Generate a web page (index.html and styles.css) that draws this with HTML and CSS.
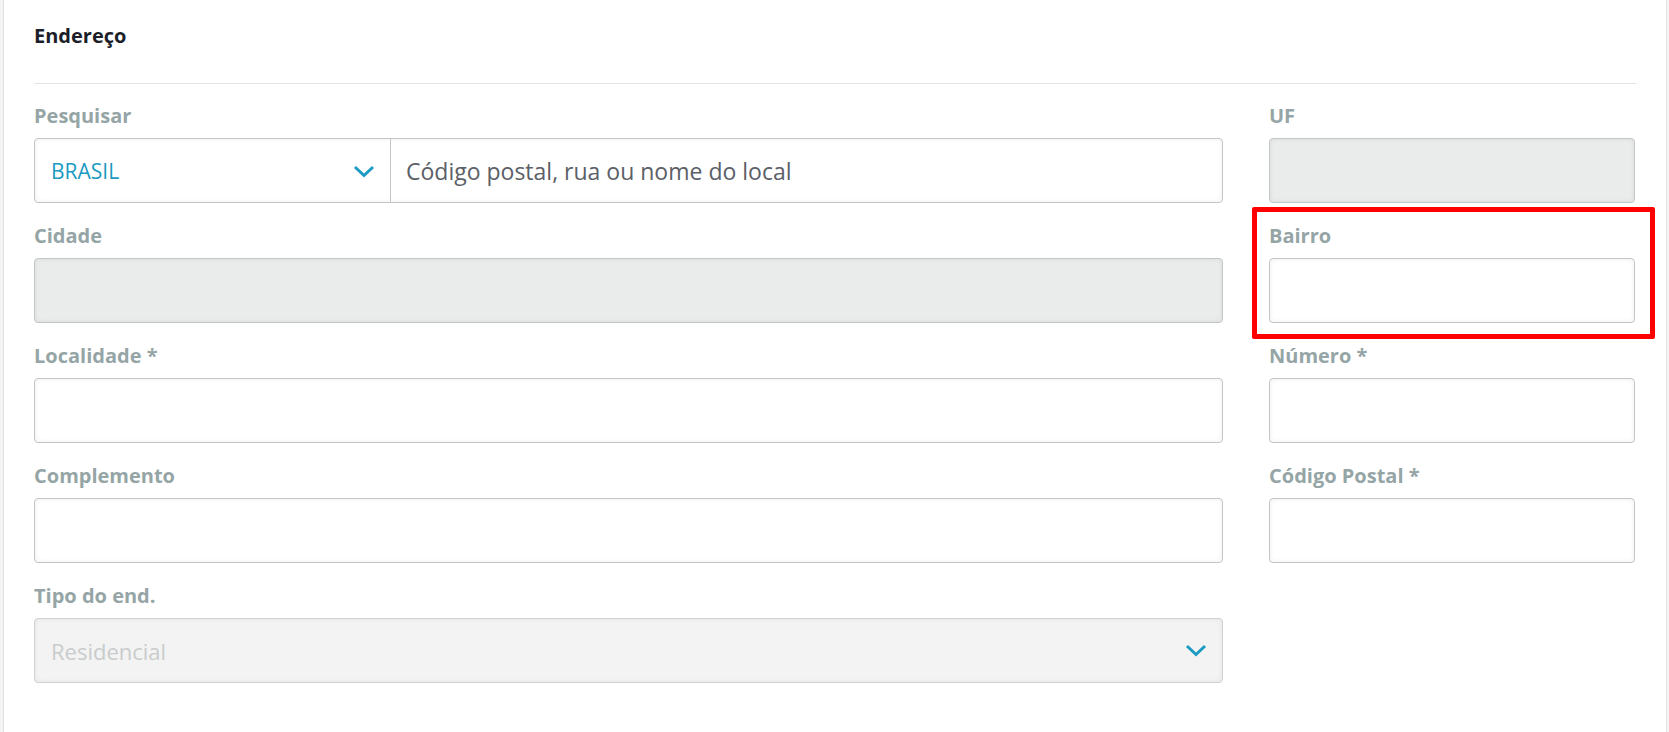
FILE: index.html
```html
<!DOCTYPE html>
<html lang="pt-BR">
<head>
  <meta charset="UTF-8" />
  <meta name="viewport" content="width=device-width, initial-scale=1.0" />
  <title>Endereço</title>
  <link rel="stylesheet" href="styles.css">
</head>
<body>
  <div class="panel">
    <h4 class="panel-title">Endereço</h4>
    <hr class="divider" />

    <div class="form-grid">
      <div class="field">
        <label for="pais">Pesquisar</label>
        <div class="search-group">
          <div class="select-wrap country">
            <select id="pais" class="country-select">
              <option>BRASIL</option>
            </select>
            <svg class="chevron" width="22" height="13" viewBox="0 0 22 13"><path d="M2 2 L11 10.5 L20 2" fill="none" stroke="currentColor" stroke-width="3"/></svg>
          </div>
          <input type="text" class="search-input" placeholder="Código postal, rua ou nome do local" />
        </div>
      </div>
      <div class="field">
        <label for="uf">UF</label>
        <input id="uf" type="text" class="control" disabled />
      </div>

      <div class="field">
        <label for="cidade">Cidade</label>
        <input id="cidade" type="text" class="control" disabled />
      </div>
      <div class="field highlight">
        <label for="bairro">Bairro</label>
        <input id="bairro" type="text" class="control" />
        <span class="mark"></span>
      </div>

      <div class="field">
        <label for="localidade">Localidade *</label>
        <input id="localidade" type="text" class="control" />
      </div>
      <div class="field">
        <label for="numero">Número *</label>
        <input id="numero" type="text" class="control" />
      </div>

      <div class="field">
        <label for="complemento">Complemento</label>
        <input id="complemento" type="text" class="control" />
      </div>
      <div class="field">
        <label for="cep">Código Postal *</label>
        <input id="cep" type="text" class="control" />
      </div>

      <div class="field">
        <label for="tipo">Tipo do end.</label>
        <div class="select-wrap">
          <select id="tipo" class="control tipo-select" disabled>
            <option>Residencial</option>
          </select>
          <svg class="chevron" width="22" height="13" viewBox="0 0 22 13"><path d="M2 2 L11 10.5 L20 2" fill="none" stroke="currentColor" stroke-width="3"/></svg>
        </div>
      </div>
    </div>
  </div>
</body>
</html>
```

FILE: styles.css
```css
body {
  margin: 0;
  padding: 0 2px 0 3px;
  background-color: #f4f4f4;
  font-family: "Open Sans", "Segoe UI", sans-serif;
}
.panel {
  background-color: #fff;
  border-left: 1px solid #e2e2e2;
  border-right: 1px solid #e2e2e2;
  padding: 23px 30px 40px;
  min-height: 669px;
}
.panel-title {
  margin: 0;
  font-size: 20px;
  line-height: 26px;
  font-weight: 700;
  color: #1c1e29;
}
.divider {
  border: none;
  border-top: 1px solid #e4e4e4;
  margin: 34px 0 19px;
}
.form-grid {
  display: grid;
  grid-template-columns: 1189px 366px;
  column-gap: 46px;
  row-gap: 20px;
  align-items: start;
}
.field {
  position: relative;
}
.field label {
  display: block;
  font-size: 20px;
  line-height: 26px;
  font-weight: 700;
  color: #95a5a6;
  margin-bottom: 9px;
}
.control {
  display: block;
  box-sizing: border-box;
  width: 100%;
  height: 65px;
  margin: 0;
  padding: 0 16px;
  border: 1px solid #c2c6c6;
  border-radius: 4px;
  background-color: #fff;
  box-shadow: inset 0 0 5px rgba(0, 0, 0, 0.07);
  font-family: inherit;
  font-size: 22px;
  outline: none;
}
.control:disabled {
  background-color: #eaeceb;
}
.search-group {
  display: flex;
  height: 65px;
  box-sizing: border-box;
  border: 1px solid #c2c6c6;
  border-radius: 4px;
  box-shadow: inset 0 0 5px rgba(0, 0, 0, 0.07);
  overflow: hidden;
}
.select-wrap {
  position: relative;
}
.select-wrap.country {
  width: 355px;
  flex-shrink: 0;
  border-right: 1px solid #c2c6c6;
}
.country-select {
  appearance: none;
  width: 100%;
  height: 100%;
  border: none;
  background: transparent;
  padding: 0 16px;
  font-family: inherit;
  font-size: 21px;
  color: #1b9ac2;
  outline: none;
}
.search-input {
  flex: 1;
  border: none;
  background: transparent;
  padding: 0 15px;
  font-family: inherit;
  font-size: 23px;
  outline: none;
}
.search-input::placeholder {
  color: #5b6067;
}
.tipo-select {
  appearance: none;
  color: #c9cccc;
  font-size: 22px;
}
.tipo-select:disabled {
  background-color: #f3f3f3;
  border-color: #d0d3d3;
  opacity: 1;
}
.chevron {
  position: absolute;
  top: 26px;
  right: 15px;
  color: #1b9ac2;
  pointer-events: none;
}
.tipo-select + .chevron {
  right: 16px;
}
.highlight .mark {
  position: absolute;
  top: -16px;
  left: -17px;
  right: -20px;
  bottom: -16px;
  border: 5px solid #ff0000;
  border-radius: 2px;
  pointer-events: none;
}
```
